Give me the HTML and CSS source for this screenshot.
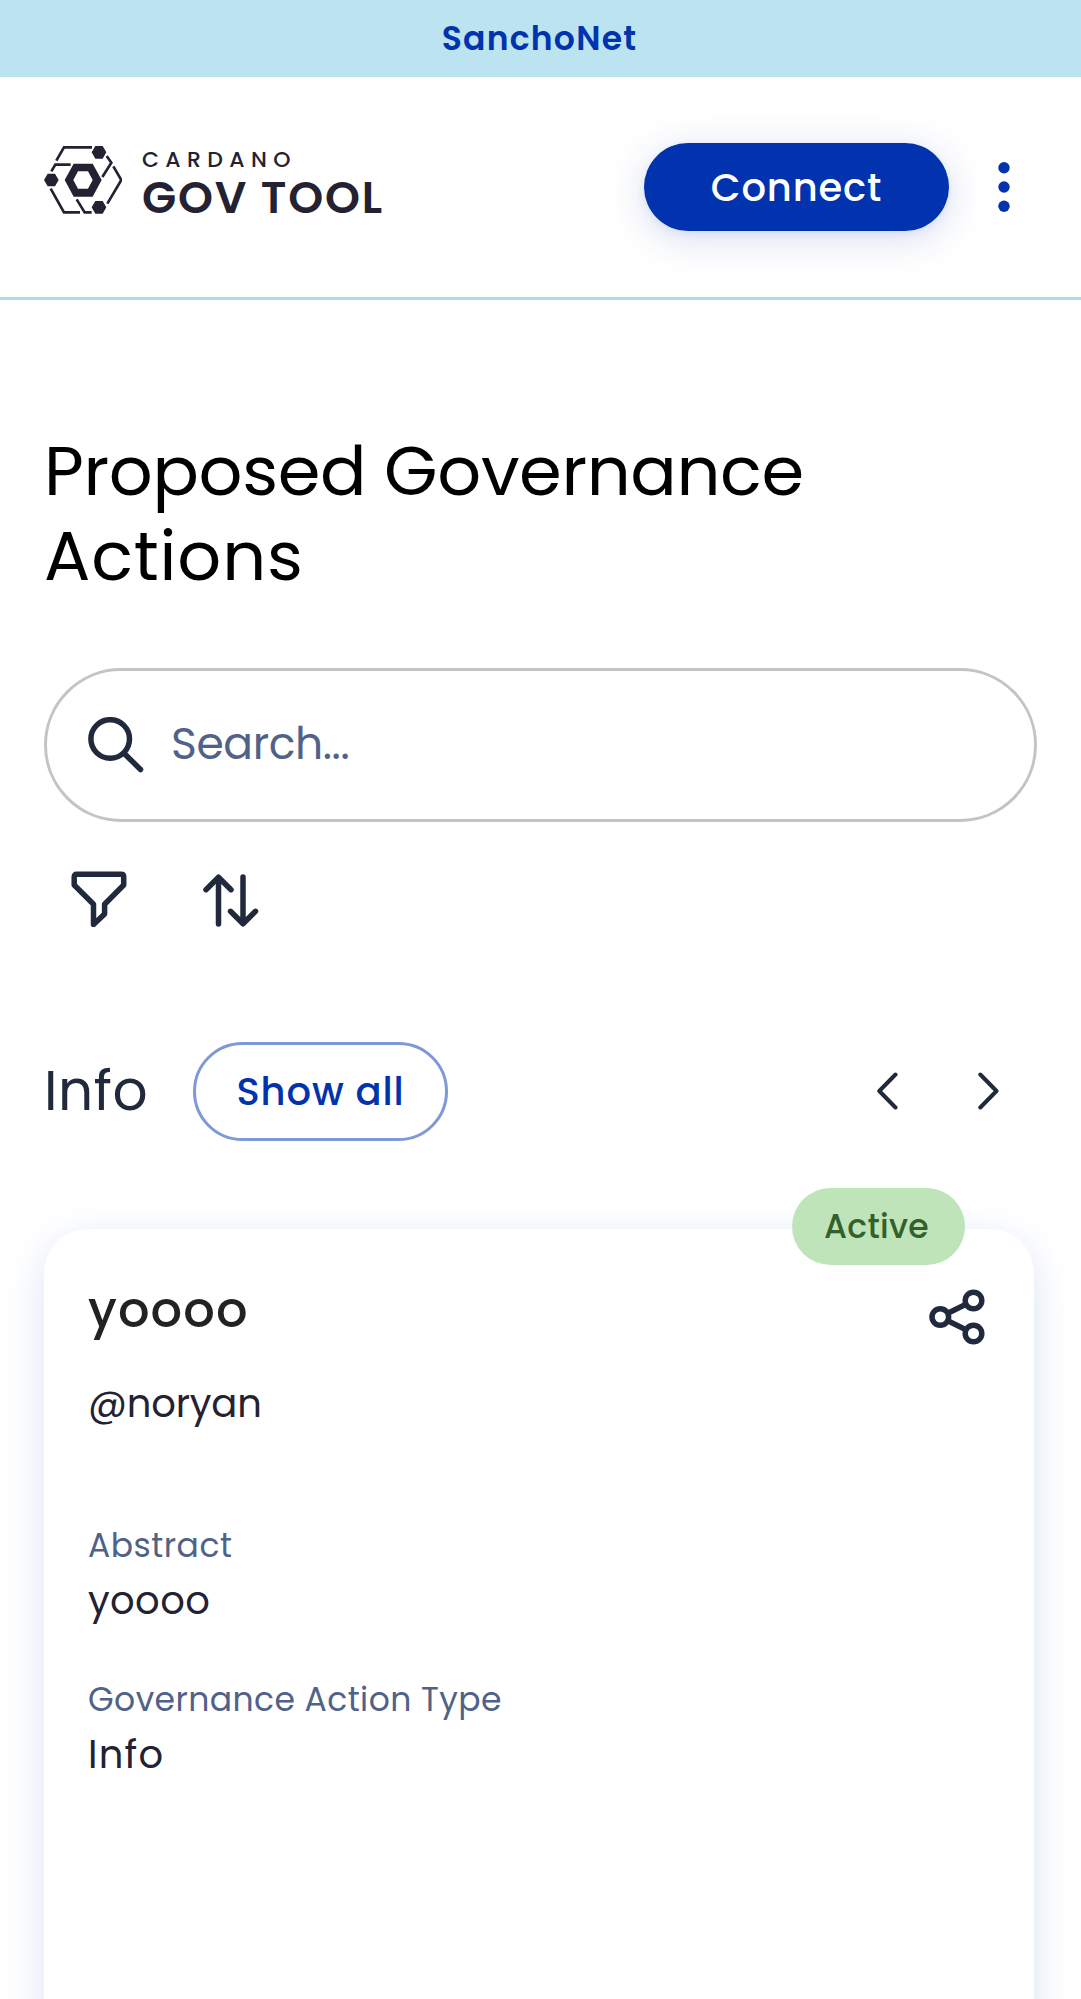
FILE: index.html
```
<!DOCTYPE html>
<html lang="en">
<head>
<meta charset="utf-8">
<title>Proposed Governance Actions</title>
<link rel="stylesheet" href="styles.css">
</head>
<body>
<div class="network-banner">SanchoNet</div>
<header class="header">
  <div class="logo">
    <svg class="logo-mark" viewBox="24 24 234 204" width="78" height="68" fill="none" stroke="#242232" stroke-width="8">
      <path d="M61 68 84 28H168M46 100 58 80H104M44 152 84 223H132M122 184 146 223H167M212 54 226 74 199 117M232 85 256 126 214 197"/>
      <g fill="#242232" stroke="none">
        <path d="M24 126 35 107H57L68 126 57 145H35ZM167 43 178 24H200L211 43 200 62H178ZM167 208 178 189H200L211 208 200 227H178Z"/>
        <path fill-rule="evenodd" d="M86 126 113 77H170L197 126 170 176H113ZM112 126 126 152H156L170 126 156 100H126Z"/>
      </g>
    </svg>
    <div class="logo-text">
      <span class="logo-top">CARDANO</span>
      <span class="logo-bottom">GOV TOOL</span>
    </div>
  </div>
  <button class="connect">Connect</button>
  <svg class="menu" width="12" height="50" viewBox="0 0 12 50" fill="#0033ad"><circle cx="6" cy="5.7" r="5.7"/><circle cx="6" cy="25" r="5.7"/><circle cx="6" cy="44.3" r="5.7"/></svg>
</header>
<main class="content">
  <h1 class="heading"><span class="heading-first">Proposed Governance</span> <span class="heading-second">Actions</span></h1>
  <div class="search">
    <svg width="56" height="56" viewBox="0 0 56 56" fill="none" stroke="#212a3d" stroke-width="5.5" stroke-linecap="round"><circle cx="22.2" cy="22" r="19.3"/><path d="M37 37.200 52.500 52.500"/></svg>
    <span class="placeholder">Search...</span>
  </div>
  <div class="tools">
    <svg width="56" height="56" viewBox="0 0 56 56" fill="none" stroke="#212a3d" stroke-width="5.5" stroke-linejoin="round"><path d="M5.700 3.200H50.200Q52.700 3.200 52.700 5.700V14L33.600 33.200V43L22.500 53.500V33.200L3.200 14V5.700Q3.200 3.200 5.700 3.200Z"/></svg>
    <svg width="56" height="56" viewBox="0 0 56 56" fill="none" stroke="#212a3d" stroke-width="5.500" stroke-linecap="round" stroke-linejoin="round"><path d="M15.500 53V6.500M3 18.700 15.500 6.200 28 18.700M40 6V52.500M27.500 40.300 40 52.800 52.500 40.300"/></svg>
  </div>
  <div class="section-head">
    <h2 class="section-title">Info</h2>
    <button class="show-all">Show all</button>
    <svg class="prev" width="22" height="38" viewBox="0 0 22 38" fill="none" stroke="#212a3d" stroke-width="4" stroke-linecap="round" stroke-linejoin="round"><path d="M18.500 2.500 2.300 19 18.500 35.500"/></svg>
    <svg width="22" height="38" viewBox="0 0 22 38" fill="none" stroke="#212a3d" stroke-width="4" stroke-linecap="round" stroke-linejoin="round"><path d="M3.300 2.500 19.500 19 3.300 35.500"/></svg>
  </div>
  <article class="card">
    <span class="status">Active</span>
    <div class="card-head">
      <h3 class="card-title">yoooo</h3>
      <svg class="share" width="56" height="56" viewBox="0 0 56 56" fill="none" stroke="#212a3d" stroke-width="5.500"><circle cx="11.300" cy="28" r="8.300"/><circle cx="44.500" cy="11.500" r="8.300"/><circle cx="44.500" cy="44.500" r="8.300"/><path d="M18.800 24.300 37 15.200M18.800 31.700 37 40.800"/></svg>
    </div>
    <p class="author">@noryan</p>
    <dl class="details">
      <dt class="label label-abstract">Abstract</dt>
      <dd class="value value-abstract">yoooo</dd>
      <dt class="label label-type">Governance Action Type</dt>
      <dd class="value value-type">Info</dd>
    </dl>
  </article>
</main>
</body>
</html>
```
FILE: styles.css
```
* { box-sizing: border-box; }

body {
  margin: 0;
  height: 1999px;
  overflow: hidden;
  background: #fff;
  font-family: Poppins, Inter, sans-serif;
  color: #242232;
}

h1, h2, h3, p, dl, dd { margin: 0; font-weight: 400; }

svg { flex: none; display: block; }

button { font-family: inherit; padding: 0; }

.network-banner {
  height: 77px;
  padding-right: 2px;
  background: #bce3f0;
  color: #0033ad;
  font-size: 33px;
  font-weight: 600;
  line-height: 77px;
  letter-spacing: 1.25px;
  text-align: center;
}

.header {
  display: flex;
  align-items: flex-start;
  height: 223px;
  padding: 66px 71px 0 44px;
  border-bottom: 3px solid #addbe8;
}

.logo { display: flex; gap: 20px; margin: 3px auto 0 0; }

.logo-text { display: flex; flex-direction: column; gap: 4px; padding-top: 2px; }

.logo-top {
  font-size: 22px;
  font-weight: 500;
  line-height: 24px;
  letter-spacing: 6.35px;
}

.logo-bottom {
  font-size: 44.5px;
  font-weight: 600;
  line-height: 44px;
  letter-spacing: 1.85px;
}

.connect {
  width: 305px;
  height: 88px;
  border: 0;
  border-radius: 44px;
  background: #0033ad;
  box-shadow: 0 7px 38px rgba(0, 51, 173, 0.17), 0 3px 9px rgba(0, 51, 173, 0.06);
  color: #fff;
  font-size: 38.5px;
  font-weight: 500;
  letter-spacing: 0.85px;
}

.menu { margin: 19px 0 0 49px; }

.content { padding: 129px 44px 0; }

.heading {
  color: #000;
  font-size: 68.75px;
  line-height: 85.25px;
}

.heading-first { display: block; letter-spacing: -0.35px; }

.heading-second { letter-spacing: 0.83px; }

.search {
  display: flex;
  align-items: center;
  gap: 27px;
  height: 154px;
  margin-top: 68px;
  padding-left: 41px;
  border: 3px solid #c4c4c4;
  border-radius: 77px;
}

.placeholder {
  margin-top: -3px;
  color: #506288;
  font-size: 44px;
  letter-spacing: -0.4px;
}

.tools { display: flex; gap: 76px; margin: 49px 0 0 27px; }

.section-head {
  display: flex;
  align-items: center;
  height: 99px;
  margin-top: 115px;
  padding-right: 38px;
}

.section-title {
  width: 149px;
  color: #212a3d;
  font-size: 55px;
  line-height: 70px;
  letter-spacing: 0.56px;
}

.show-all {
  width: 255px;
  height: 99px;
  border: 3px solid #7f99d6;
  border-radius: 50px;
  background: #fff;
  color: #0033ad;
  font-size: 38.5px;
  font-weight: 500;
  letter-spacing: 0.88px;
}

.prev { margin: 0 78px 0 auto; }

.card {
  position: relative;
  width: 990px;
  height: 990px;
  margin-top: 88px;
  padding: 48px 44px;
  border-radius: 44px;
  background: #fff;
  box-shadow: 0 11px 41px #dde3f5;
}

/* Pill that straddles the card's top edge */
.status {
  position: absolute;
  top: -41px;
  right: 69px;
  width: 173px;
  height: 77px;
  padding-right: 4px;
  border-radius: 39px;
  background: #c0e4ba;
  color: #33602b;
  font-size: 33px;
  font-weight: 500;
  line-height: 77px;
  letter-spacing: 0.3px;
  text-align: center;
}

.card-head { display: flex; justify-content: space-between; }

.card-title {
  color: #222;
  font-size: 49.5px;
  font-weight: 500;
  line-height: 66px;
  letter-spacing: 1.1px;
}

.share { margin: 12px 5px 0 0; }

.author {
  margin-top: 30px;
  font-size: 38.5px;
  line-height: 57px;
  letter-spacing: -0.2px;
}

.details { margin-top: 89px; }

.label {
  color: #506288;
  font-size: 33px;
  line-height: 50px;
}

.label-abstract { letter-spacing: 0.5px; }

.label-type { margin-top: 44px; letter-spacing: 0.42px; }

.value {
  font-size: 38.5px;
  line-height: 60px;
}

.value-abstract { letter-spacing: 0.4px; }

.value-type { letter-spacing: 1.2px; }
```
